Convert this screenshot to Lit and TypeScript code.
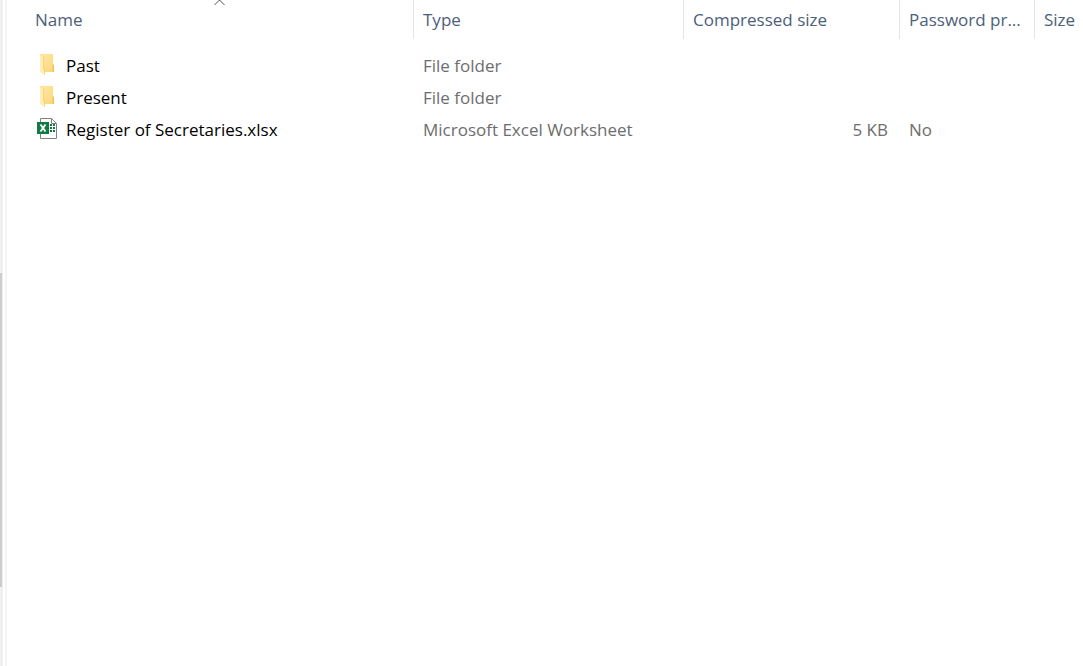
import { LitElement, html, css, nothing } from "lit";
import { customElement, state } from "lit/decorators.js";

interface Entry {
  name: string;
  kind: "folder" | "excel";
  type: string;
  compressed: string;
  protection: string;
  size: string;
}

const entries: Entry[] = [
  { name: "Past", kind: "folder", type: "File folder", compressed: "", protection: "", size: "" },
  { name: "Present", kind: "folder", type: "File folder", compressed: "", protection: "", size: "" },
  { name: "Register of Secretaries.xlsx", kind: "excel", type: "Microsoft Excel Worksheet", compressed: "5 KB", protection: "No", size: "" },
];

const folderIcon = html`<svg class="icon" viewBox="0 2 24 24" aria-hidden="true">
  <defs>
    <linearGradient id="back" x1="0" x2="1" y1="0" y2="1">
      <stop offset="0" stop-color="#ffe9a2" />
      <stop offset="1" stop-color="#fad777" />
    </linearGradient>
  </defs>
  <path d="M5 2h13v10.500l1 1V20H8z" fill="url(#back)" />
  <path d="M17.500 12.500h1l.5 1V20h-1.500z" fill="#eac25c" />
  <path d="M5 2l1 .8 2.500 2.200v12l1 1v5L5 20z" fill="#ffefb4" />
  <path d="M6 2.500L8.500 5v12l1 1v5" fill="none" stroke="#eccb70" stroke-width=".7" />
</svg>`;

const excelIcon = html`<svg class="icon" viewBox="0 2 24 24" aria-hidden="true">
  <path d="M5.500 2.500h11l5 5v15h-16z" fill="#fff" stroke="#808386" />
  <path d="M16.500 2.500v5h5" fill="none" stroke="#808386" />
  <path d="M15 8h2v2h-2zM18 8h2v2h-2zM15 11h2v2h-2zM18 11h2v2h-2zM15 14h2v2h-2zM18 14h2v2h-2z" fill="#107c41" />
  <rect x="2" y="6" width="12" height="12" fill="#107c41" />
  <path d="M5.500 8.500l5 7M10.500 8.500l-5 7" stroke="#fff" stroke-width="1.900" fill="none" />
</svg>`;

@customElement("app-root")
export class AppRoot extends LitElement {
  @state() private ascending = true;

  static styles = css`
    :host {
      display: flex;
      min-height: 100vh;
      background: #fff;
      font-family: "Open Sans", "Noto Sans", sans-serif;
      font-size: 17px;
      line-height: 24px;
      color: #6d6d6d;
    }
    .track {
      flex: none;
      width: 3px;
      display: grid;
      grid-template-rows: 273fr 314fr 79fr;
      background: #f0f0f0;
    }
    .thumb {
      grid-row: 2;
      width: 2px;
      background: #cdcdcd;
    }
    .divider {
      flex: none;
      width: 2px;
      margin-left: 2px;
      background: #f5f5f5;
    }
    .pane {
      flex: 1;
      min-width: 0;
      overflow: hidden;
      padding-left: 19px;
    }
    table {
      width: 100%;
      table-layout: fixed;
      border-collapse: separate;
      border-spacing: 0;
    }
    .name { width: 388px; }
    .type { width: 270px; }
    .compressed { width: 216px; }
    .protection { width: 135px; }
    th {
      position: relative;
      box-sizing: border-box;
      height: 39px;
      padding: 0;
      border-right: 1px solid #e5e5e5;
    }
    th:last-child { border-right: 0; }
    .sort {
      display: block;
      width: 100%;
      height: 39px;
      padding: 0 0 0 9px;
      border: 0;
      background: none;
      font: inherit;
      font-weight: 400;
      color: #4c607a;
      text-align: left;
      white-space: nowrap;
    }
    .arrow {
      position: absolute;
      top: 0;
      left: 50%;
      width: 12px;
      height: 6px;
      margin-left: -6px;
    }
    .arrow.down { transform: scaleY(-1); }
    .rows::before {
      content: "";
      display: block;
      height: 11px;
    }
    td {
      height: 32px;
      padding: 0 0 0 9px;
      white-space: nowrap;
    }
    .number {
      padding-right: 12px;
      text-align: right;
    }
    .file {
      display: flex;
      align-items: center;
      gap: 7px;
      color: #000;
      text-decoration: none;
    }
    .icon {
      flex: none;
      width: 24px;
      height: 24px;
    }
  `;

  private toggle() {
    this.ascending = !this.ascending;
  }

  private header(label: string, cls: string, sorted = false) {
    return html`<th class=${cls} scope="col" aria-sort=${sorted ? (this.ascending ? "ascending" : "descending") : nothing}>
      <button class="sort" type="button" @click=${sorted ? this.toggle : nothing}>${label}</button>
      ${sorted
        ? html`<svg class="arrow ${this.ascending ? "" : "down"}" viewBox="0 0 12 6" aria-hidden="true">
            <path d="M.5 5L5.500 0l5 5" fill="none" stroke="#555" />
          </svg>`
        : nothing}
    </th>`;
  }

  render() {
    const rows = this.ascending ? entries : [...entries].reverse();
    return html`
      <div class="track"><div class="thumb"></div></div>
      <div class="divider"></div>
      <main class="pane">
        <table>
          <thead>
            <tr>
              ${this.header("Name", "name", true)}
              ${this.header("Type", "type")}
              ${this.header("Compressed size", "compressed")}
              ${this.header("Password pr...", "protection")}
              ${this.header("Size", "size")}
            </tr>
          </thead>
          <tbody class="rows">
            ${rows.map(
              (e) => html`<tr>
                <td><a class="file" href="#">${e.kind === "folder" ? folderIcon : excelIcon}<span>${e.name}</span></a></td>
                <td>${e.type}</td>
                <td class="number">${e.compressed}</td>
                <td>${e.protection}</td>
                <td>${e.size}</td>
              </tr>`
            )}
          </tbody>
        </table>
      </main>
    `;
  }
}
